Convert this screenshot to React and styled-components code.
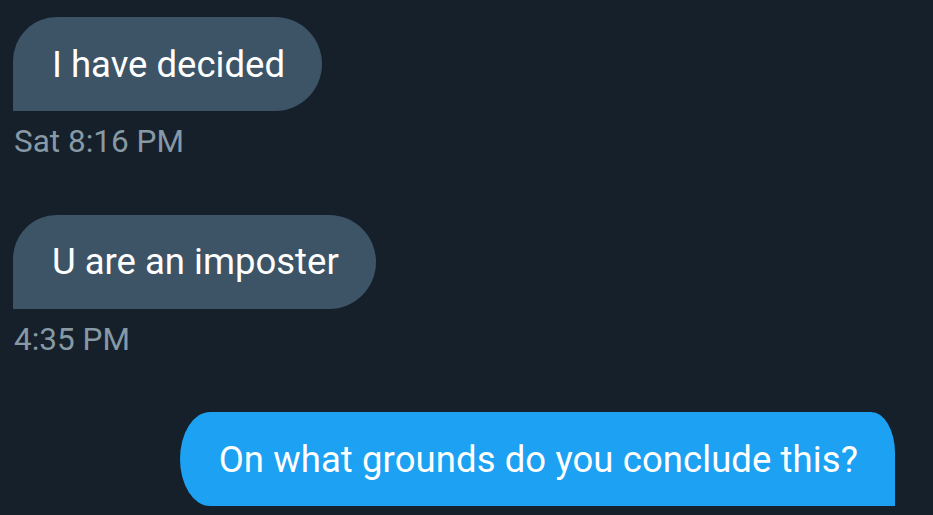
import React from 'react';
import styled, { createGlobalStyle } from 'styled-components';

const Global = createGlobalStyle`
  html, body {
    margin: 0;
    padding: 0;
    background: #15202b;
  }
  body {
    font-family: Roboto, "Noto Sans", sans-serif;
    -webkit-font-smoothing: antialiased;
  }
`

const Thread = styled.div`
  width: 933px;
  height: 515px;
  box-sizing: border-box;
  padding: 17px 38px 0 13px;
  display: flex;
  flex-direction: column;
  gap: 54px;
  overflow: hidden;
`

const Group = styled.div`
  display: flex;
  flex-direction: column;
  align-items: ${({mine}) => mine ? 'flex-end' : 'flex-start'};
`

const Bubble = styled.div`
  height: 94px;
  box-sizing: border-box;
  display: flex;
  align-items: center;
  padding: 0 37px 0 39px;
  font-size: 36.5px;
  color: #fff;
  white-space: nowrap;
  background: ${({mine}) => mine ? '#1da1f2' : '#3d5466'};
  border-radius: ${({mine}) => mine
    ? '30px 24px 0 30px / 47px 41px 0 47px'
    : '44px 47px 47px 0'};
`

const Text = styled.span`
  letter-spacing: ${({mine}) => mine ? '0.08px' : '0'};
`

const Time = styled.div`
  margin-top: 13px;
  padding-left: 1px;
  font-size: 31.5px;
  line-height: 36.5px;
  color: #8899a6;
`

const messages = [
  { text: 'I have decided', time: 'Sat 8:16 PM' },
  { text: 'U are an imposter', time: '4:35 PM' },
  { text: 'On what grounds do you conclude this?', mine: true },
]

export default function App() {
  return <>
    <Global />
    <Thread>
      {messages.map((m, i) =>
        <Group key={i} mine={m.mine}>
          <Bubble mine={m.mine}><Text mine={m.mine}>{m.text}</Text></Bubble>
          {m.time && <Time>{m.time}</Time>}
        </Group>
      )}
    </Thread>
  </>
}
